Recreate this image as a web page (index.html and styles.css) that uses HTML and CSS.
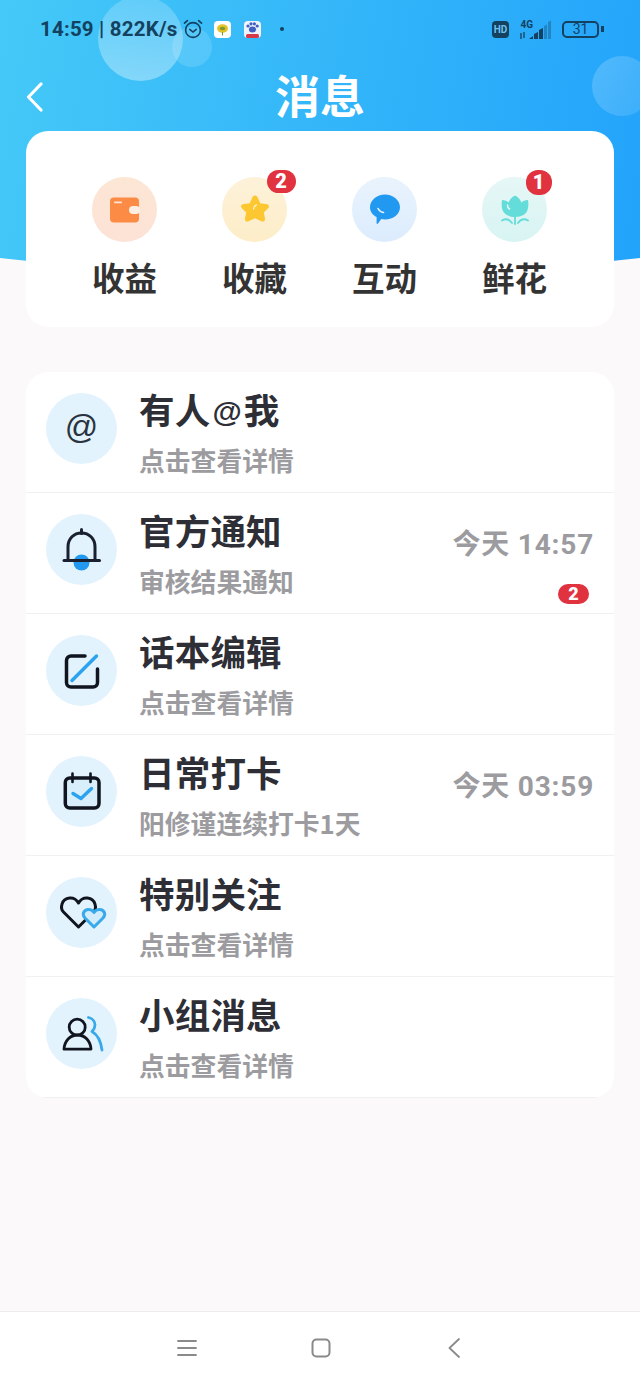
FILE: index.html
```html
<!DOCTYPE html>
<html lang="zh-CN">
<head>
  <meta charset="UTF-8" />
  <meta name="viewport" content="width=device-width, initial-scale=1" />
  <title>消息</title>
  <link rel="stylesheet" href="styles.css">
</head>
<body>

  <header class="hero">
    <span class="bubble bubble-big"></span>
    <span class="bubble bubble-small"></span>
    <span class="bubble bubble-right"></span>

    <!-- Status bar -->
    <div class="status-bar">
      <span class="status-text">14:59 | 822K/s</span>
      <svg class="alarm" width="20" height="20" viewBox="0 0 20 20" fill="none" stroke="#14415f" stroke-width="1.6" stroke-linecap="round">
        <circle cx="10" cy="11" r="7.4"/>
        <path d="M6.8 10.4 10 13l3.2-2.6"/>
        <path d="M1.5 4.2 4.4 1.6M18.5 4.2l-2.9-2.6"/>
      </svg>
      <svg class="app-icon" width="17" height="17" viewBox="0 0 17 17">
        <rect width="17" height="17" rx="4" fill="#fff"/>
        <ellipse cx="8.5" cy="7.5" rx="5.5" ry="4.2" fill="#e3c22a"/>
        <ellipse cx="8.5" cy="7.5" rx="2.8" ry="1.8" fill="#7d9a2a"/>
        <path d="M8.5 11v3.5" stroke="#6f9d3a"/>
      </svg>
      <svg class="app-icon" width="17" height="17" viewBox="0 0 17 17">
        <rect width="17" height="17" rx="4" fill="#eef3fb"/>
        <circle cx="4" cy="5" r="1.6" fill="#3f5fc4"/>
        <circle cx="7" cy="2.8" r="1.6" fill="#3f5fc4"/>
        <circle cx="10.4" cy="2.8" r="1.6" fill="#3f5fc4"/>
        <circle cx="13.2" cy="5" r="1.6" fill="#3f5fc4"/>
        <ellipse cx="8.5" cy="8.5" rx="3.6" ry="3" fill="#3f5fc4"/>
        <rect x="2" y="13" width="13" height="4" rx="1.5" fill="#d8394a"/>
      </svg>
      <span class="status-dot"></span>
      <span class="status-right">
        <span class="hd">HD</span>
        <svg class="signal" width="34" height="21" viewBox="0 0 34 21">
          <text x="1.500" y="9" class="signal-text">4G</text>
          <path d="M2 14v6M5 13v6" stroke="#14415f" stroke-width="1.3"/>
          <path d="M10 20l4-3v3zM15 20v-5l4-2v7zM20 20v-9l4-2v11z" fill="#14415f"/>
          <path d="M25 20V7l3-1.500V20zM29 20V3l3-1.500V20z" fill="#14415f" opacity=".35"/>
        </svg>
        <span class="battery"><span class="battery-level">31</span></span>
      </span>
    </div>

    <!-- Title -->
    <div class="title-bar">
      <svg class="back" width="17" height="30" viewBox="0 0 17 30" fill="none" stroke="#fff" stroke-width="3.200" stroke-linecap="round" stroke-linejoin="round">
        <path d="M15 2 2.500 15 15 28"/>
      </svg>
      <h1>消息</h1>
    </div>

    <!-- Quick entries -->
    <div class="summary">
      <div class="entry">
        <div class="entry-icon icon-orange">
          <svg width="32" height="26" viewBox="0 0 32 26">
            <rect x="1" y=".5" width="29" height="25" rx="4" fill="#fb8b45"/>
            <rect x="20" y="9" width="11" height="8" rx="4" fill="#fdeee2"/>
            <rect x="5" y="4.500" width="8" height="1.800" rx=".9" fill="#ffe6d4"/>
          </svg>
        </div>
        <span class="entry-label">收益</span>
      </div>
      <div class="entry">
        <div class="entry-icon icon-yellow">
          <svg width="32" height="31" viewBox="0 0 32 31">
            <path d="M16 1.500c1.500 0 2.300 1.100 3 2.700l2.200 5 5.500.7c3.400.4 4.300 2.600 2.200 4.600l-4.100 3.900 1.100 5.500c.6 3.200-1.200 4.600-4 3.100L16 24.200 10.100 27c-2.800 1.500-4.600.1-4-3.100l1.100-5.500-4.100-3.900C1 12.500 1.900 10.300 5.300 9.900l5.500-.7 2.200-5c.7-1.600 1.500-2.700 3-2.700z" fill="#fcc731"/>
            <path d="M14.500 15c.3-2.200 1.300-3.500 3-4.200" fill="none" stroke="#fff3c4" stroke-width="1.300" stroke-linecap="round"/>
          </svg>
        </div>
        <span class="entry-label">收藏</span>
        <span class="badge badge-entry">2</span>
      </div>
      <div class="entry">
        <div class="entry-icon icon-blue">
          <svg width="32" height="31" viewBox="0 0 32 31">
            <path d="M16 .5c8.200 0 15 5.800 15 12.700S24.200 25.500 16 25.500c-1.300 0-2.500-.1-3.700-.4L9 29.600c-.6.700-1.400.4-1.400-.5v-6C3.600 20.900 1 17.400 1 13.200 1 6.300 7.800.5 16 .5z" fill="#2199f1"/>
            <path d="M9 14.500c1.200 2.300 3 3.600 5.500 4" fill="none" stroke="#e6f4ff" stroke-width="1.600" stroke-linecap="round"/>
          </svg>
        </div>
        <span class="entry-label">互动</span>
      </div>
      <div class="entry">
        <div class="entry-icon icon-teal">
          <svg width="28" height="30" viewBox="0 0 28 30" fill="none">
            <path d="M1 5c3 0 5 1 6.500 2.500C9 4 11 2 14 .5c3 1.500 5 3.500 6.500 7C22 6 24 5 27 5c.6 3.500.5 7-.5 10-1.200 3.800-5.500 7-12.500 7S2.700 18.800 1.500 15C.5 12 .4 8.500 1 5z" fill="#64dcd9"/>
            <path d="M6.500 10c0 2 .7 3.300 2 4" stroke="#e4fbfa" stroke-width="1.500" stroke-linecap="round"/>
            <path d="M14 22v7M1 25.500c3-1.800 7-1.500 10 2.500M27 25.500c-3-1.800-7-1.500-10 2.500" stroke="#64dcd9" stroke-width="1.800" stroke-linecap="round"/>
          </svg>
        </div>
        <span class="entry-label">鲜花</span>
        <span class="badge badge-entry badge-round">1</span>
      </div>
    </div>
  </header>

  <!-- Message list -->
  <main class="message-list">
    <div class="message">
      <div class="message-icon"><span class="at">@</span></div>
      <div class="message-body">
        <div class="message-title">有人<span class="title-at">@</span>我</div>
        <div class="message-sub">点击查看详情</div>
      </div>
    </div>

    <div class="message">
      <div class="message-icon">
        <svg width="44" height="44" viewBox="0 0 44 44" fill="none" stroke="#1a2030">
          <circle cx="21.500" cy="34.500" r="8" fill="#2199f1" stroke="none"/>
          <path d="M8 32V19C8 10.500 14 5 21.500 5S35 10.500 35 19v13" stroke-width="3"/>
          <path d="M21.500 1.500v4" stroke-width="3" stroke-linecap="round"/>
          <path d="M4 32.500h35.500" stroke-width="3" stroke-linecap="round"/>
        </svg>
      </div>
      <div class="message-body">
        <div class="message-title">官方通知</div>
        <div class="message-sub">审核结果通知</div>
      </div>
      <div class="message-meta">
        <span class="message-time">今天 14:57</span>
        <span class="badge badge-list">2</span>
      </div>
    </div>

    <div class="message">
      <div class="message-icon">
        <svg width="40" height="40" viewBox="0 0 40 40" fill="none" stroke-width="3.500" stroke-linecap="round">
          <path d="M23 5H9a4.500 4.500 0 0 0-4.500 4.500v22A4.500 4.500 0 0 0 9 36h22a4.500 4.500 0 0 0 4.500-4.500V18" stroke="#10151f"/>
          <path d="M10 29.500 34.500 5" stroke="#2ba3ee"/>
        </svg>
      </div>
      <div class="message-body">
        <div class="message-title">话本编辑</div>
        <div class="message-sub">点击查看详情</div>
      </div>
    </div>

    <div class="message">
      <div class="message-icon">
        <svg width="40" height="40" viewBox="0 0 40 40" fill="none" stroke-linecap="round" stroke-linejoin="round">
          <rect x="3.300" y="6" width="33.700" height="30" rx="4.500" fill="#d8eefb" stroke="#10151f" stroke-width="3.500"/>
          <path d="M10.500 1.500V10M28.500 1.500V10" stroke="#10151f" stroke-width="2.600"/>
          <path d="M11 21.500l8 5 10.500-10" stroke="#2ba3ee" stroke-width="3.400"/>
        </svg>
      </div>
      <div class="message-body">
        <div class="message-title">日常打卡</div>
        <div class="message-sub">阳修谨连续打卡1天</div>
      </div>
      <div class="message-meta">
        <span class="message-time">今天 03:59</span>
      </div>
    </div>

    <div class="message">
      <div class="message-icon">
        <svg width="50" height="40" viewBox="0 0 50 40" fill="none" stroke-width="3" stroke-linejoin="round">
          <path d="M21.500 34 6.500 19C3 15.500 4 6 12.500 5c4-.5 7.500 2 9 5 1.500-3 5-5.500 9-5 8.500 1 9.500 10.500 6 14z" stroke="#10151f"/>
          <path d="M37 34l-9-9c-4-4.500 0-9 4-8.500 2.500 0 4 1.500 5 3 1-1.500 2.500-3 5-3 4-.5 8 4 4 8.500z" fill="#d3ecfb" stroke="#38a9ea"/>
        </svg>
      </div>
      <div class="message-body">
        <div class="message-title">特别关注</div>
        <div class="message-sub">点击查看详情</div>
      </div>
    </div>

    <div class="message">
      <div class="message-icon">
        <svg width="44" height="40" viewBox="0 0 44 40" fill="none" stroke-linecap="round" stroke-linejoin="round">
          <circle cx="17.200" cy="13.200" r="8" stroke="#10151f" stroke-width="2.800"/>
          <path d="M4 35.200C4.500 27 10 21 17.500 21S30.500 27 31 35.200z" stroke="#10151f" stroke-width="2.800"/>
          <path d="M28.500 3.500C33 4.500 35 8 35 11c0 3-1.500 5-3 6.500 6 3.500 9 10.500 10 18.500" stroke="#38a9ea" stroke-width="2.800"/>
        </svg>
      </div>
      <div class="message-body">
        <div class="message-title">小组消息</div>
        <div class="message-sub">点击查看详情</div>
      </div>
    </div>
  </main>

  <!-- System navigation -->
  <nav class="system-nav">
    <svg width="20" height="18" viewBox="0 0 20 18" fill="none" stroke="#8a8a8a" stroke-width="1.800" stroke-linecap="round">
      <path d="M1 2h18M1 9h18M1 16h18"/>
    </svg>
    <svg width="20" height="20" viewBox="0 0 20 20" fill="none" stroke="#8a8a8a" stroke-width="2">
      <rect x="1.500" y="1.500" width="17" height="17" rx="4"/>
    </svg>
    <svg width="12" height="20" viewBox="0 0 12 20" fill="none" stroke="#8a8a8a" stroke-width="1.800" stroke-linecap="round" stroke-linejoin="round">
      <path d="M11 1 1.500 10 11 19"/>
    </svg>
  </nav>

</body>
</html>
```

FILE: styles.css
```css
* {
  box-sizing: border-box;
}
body {
  margin: 0;
  min-height: 100vh;
  display: flex;
  flex-direction: column;
  background: #fbf9fa;
  font-family: "Noto Sans CJK SC", "Noto Sans", sans-serif;
  color: #2e2e36;
}

/* Header */
.hero {
  position: relative;
  padding: 0 26px;
  overflow: hidden;
}
.hero::before {
  content: "";
  position: absolute;
  left: 0;
  top: 0;
  width: 640px;
  height: 280px;
  background: linear-gradient(100deg, #45c9f7, #22a3fb);
  clip-path: path("M0 0H640V258Q320 296 0 258Z");
}
.bubble {
  position: absolute;
  border-radius: 50%;
}
.bubble-big {
  left: 98px;
  top: -4px;
  width: 85px;
  height: 85px;
  background: linear-gradient(rgba(255, 255, 255, 0.18), rgba(255, 255, 255, 0.36));
}
.bubble-small {
  left: 172px;
  top: 27px;
  width: 40px;
  height: 40px;
  background: rgba(255, 255, 255, 0.14);
}
.bubble-right {
  left: 592px;
  top: 56px;
  width: 60px;
  height: 60px;
  background: linear-gradient(120deg, rgba(255, 255, 255, 0.2), rgba(255, 255, 255, 0.1));
}

/* Status bar */
.status-bar {
  position: relative;
  height: 58px;
  margin-right: 12px;
  padding-left: 14px;
  display: flex;
  align-items: center;
  color: #14415f;
}
.status-text {
  font-family: Roboto, sans-serif;
  font-size: 20.500px;
  font-weight: 700;
  letter-spacing: 0.200px;
  white-space: nowrap;
}
.alarm {
  margin-left: 6px;
}
.app-icon {
  margin-left: 11px;
}
.app-icon + .app-icon {
  margin-left: 13px;
}
.status-dot {
  width: 4px;
  height: 4px;
  margin-left: 19px;
  border-radius: 50%;
  background: #14415f;
}
.status-right {
  margin-left: auto;
  display: flex;
  align-items: center;
}
.hd {
  width: 17px;
  height: 17px;
  border-radius: 4px;
  background: #14415f;
  color: #6cc0ee;
  font-family: Roboto, sans-serif;
  font-size: 10px;
  font-weight: 700;
  line-height: 17px;
  text-align: center;
}
.signal {
  margin-left: 10px;
}
.signal-text {
  font-family: Roboto, sans-serif;
  font-size: 10px;
  font-weight: 700;
  fill: #14415f;
}
.battery {
  position: relative;
  width: 37px;
  height: 17px;
  margin: 0 3px 0 9px;
  border: 2.500px solid #14415f;
  border-radius: 5px;
}
.battery::after {
  content: "";
  position: absolute;
  right: -7px;
  top: 3px;
  width: 3px;
  height: 6px;
  background: #14415f;
}
.battery-level {
  display: block;
  font-family: Roboto, sans-serif;
  font-size: 14px;
  line-height: 12px;
  text-align: center;
}

/* Title */
.title-bar {
  position: relative;
  height: 73px;
  display: flex;
  align-items: center;
  justify-content: center;
}
.title-bar h1 {
  margin: 0;
  color: #fff;
  font-size: 45px;
  font-weight: 700;
  line-height: 73px;
}
.back {
  position: absolute;
  left: 0;
  top: 24px;
}

/* Quick entries */
.summary {
  position: relative;
  height: 196px;
  padding: 46px 34px 0 33.500px;
  display: grid;
  grid-template-columns: repeat(4, 130px);
  background: #fff;
  border-radius: 22px;
}
.entry {
  position: relative;
  display: flex;
  flex-direction: column;
  align-items: center;
}
.entry-icon {
  width: 65px;
  height: 65px;
  border-radius: 50%;
  display: flex;
  align-items: center;
  justify-content: center;
}
.icon-orange {
  background: linear-gradient(#fce6d4, #fde2d6);
}
.icon-yellow {
  background: linear-gradient(#fdf2da, #fdedc8);
}
.icon-blue {
  background: linear-gradient(#e9f3fd, #dcecfd);
}
.icon-teal {
  background: linear-gradient(#e6f7f6, #d7f4f3);
}
.entry-label {
  margin-top: 13px;
  color: #333;
  font-size: 32.500px;
  font-weight: 700;
  line-height: 44px;
}
.badge {
  background: #e0323f;
  color: #fff;
  font-family: Roboto, sans-serif;
  font-weight: 900;
  text-align: center;
}
.badge-entry {
  position: absolute;
  left: 77px;
  top: -7px;
  width: 29px;
  height: 23px;
  border-radius: 12px;
  font-size: 20px;
  line-height: 23px;
}
.badge-round {
  width: 26px;
  height: 25px;
  left: 76px;
  line-height: 25px;
}

/* Message list */
.message-list {
  margin: 45px 26px 0;
  background: #fff;
  border-radius: 22px;
  overflow: hidden;
}
.message {
  height: 121px;
  padding: 21px 20px 0;
  display: flex;
  align-items: flex-start;
  border-bottom: 1px solid #f0f0f0;
}
.message-icon {
  flex: none;
  width: 71px;
  height: 71px;
  border-radius: 50%;
  background: #e3f3fd;
  display: flex;
  align-items: center;
  justify-content: center;
}
.at {
  margin-bottom: 3px;
  font-family: "Liberation Sans", sans-serif;
  font-size: 33px;
  line-height: 40px;
  color: #2a3340;
}
.message-body {
  flex: 1;
  margin: -6px 0 0 22px;
}
.message-title {
  color: #2e2e36;
  font-size: 35.500px;
  font-weight: 700;
  line-height: 44px;
  letter-spacing: 0.2px;
}
.title-at {
  padding: 0 2px;
  font-family: "Liberation Sans", sans-serif;
  font-size: 30px;
  line-height: 0;
  vertical-align: 2px;
}
.message-sub {
  margin-top: 11px;
  color: #9c9ca0;
  font-size: 25.800px;
  font-weight: 700;
  line-height: 36px;
}
.message-meta {
  margin-top: 13px;
  display: flex;
  flex-direction: column;
  align-items: flex-end;
}
.message-time {
  color: #9c9ca0;
  font-family: Roboto, "Noto Sans CJK SC", sans-serif;
  font-size: 28px;
  font-weight: 700;
  line-height: 36px;
  letter-spacing: 0.800px;
}
.badge-list {
  width: 31px;
  height: 20px;
  margin: 21px 5px 0 0;
  border-radius: 10px;
  font-size: 18px;
  line-height: 20px;
}

/* System nav */
.system-nav {
  margin-top: auto;
  height: 76px;
  padding: 0 0 4px 1px;
  display: grid;
  grid-template-columns: repeat(3, 133.500px);
  justify-content: center;
  justify-items: center;
  align-items: center;
  background: #fff;
  border-top: 1px solid #eeecec;
}
```
